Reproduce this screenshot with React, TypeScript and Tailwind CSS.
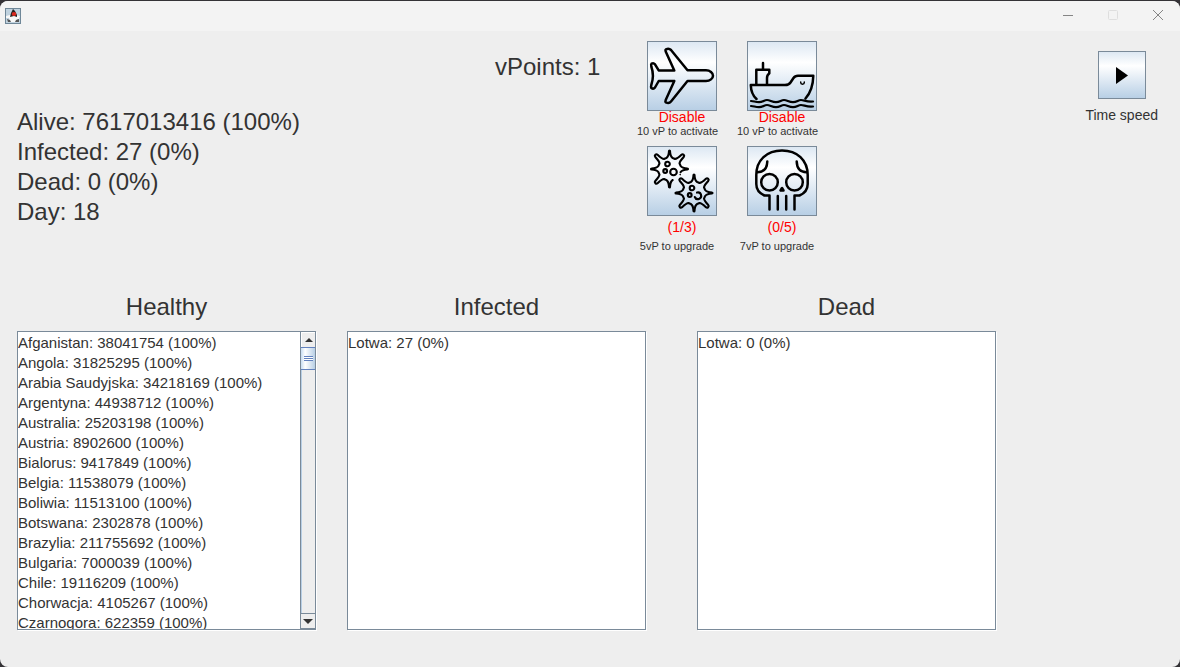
import type { ReactNode } from "react";

const healthy = [
  "Afganistan: 38041754 (100%)",
  "Angola: 31825295 (100%)",
  "Arabia Saudyjska: 34218169 (100%)",
  "Argentyna: 44938712 (100%)",
  "Australia: 25203198 (100%)",
  "Austria: 8902600 (100%)",
  "Bialorus: 9417849 (100%)",
  "Belgia: 11538079 (100%)",
  "Boliwia: 11513100 (100%)",
  "Botswana: 2302878 (100%)",
  "Brazylia: 211755692 (100%)",
  "Bulgaria: 7000039 (100%)",
  "Chile: 19116209 (100%)",
  "Chorwacja: 4105267 (100%)",
  "Czarnogora: 622359 (100%)",
];

const metal =
  "flex items-center justify-center border border-[#7a8a99] bg-linear-to-b from-[#dde8f3] via-white via-30% to-[#b8cfe5]";

const iconProps = {
  viewBox: "0 0 70 70",
  className: "size-[70px] shrink-0",
  fill: "none",
  stroke: "#000",
  strokeWidth: 2.5,
  strokeLinecap: "round" as const,
  strokeLinejoin: "round" as const,
  "aria-hidden": true,
};

function PlaneIcon() {
  return (
    <svg {...iconProps}>
      <path d="M40.5 29.3H59C63 29.3 66 32 66 34.7S63 40 59 40H40.5L24 60.5Q22 63 19 61.5Q18 60.5 18.7 59L27.3 40H11.7L8 46.5Q6.500 48.500 4.300 47Q3.800 46 4.300 44Q7.500 34.700 4.300 25.500Q3.800 23.500 4.600 22.600Q6.500 21.500 8 23.300L11.700 29.400H27.300L18.700 10.500Q18 9 19 8.300Q22 7 24 9Z" />
    </svg>
  );
}

function ShipIcon() {
  return (
    <svg {...iconProps}>
      <path d="M9.500 58Q4 53 3.800 44H38Q42 44 43.500 41.500L46.500 37Q48 34.700 51 34.700H66.300Q66 49 58.500 57.500" />
      <path d="M9.300 43.500V28.700H22.300V32.500Q20 34 20 37V43.500M16 28.500V22" />
      <path d="M53.700 41V41.600Q53.700 43.200 55.500 43.200T57.300 41.600V41" strokeWidth="1.500" />
      <path d="M4 60C7 60 8 61.200 12 61.200S17 59 20 59S25 61.200 29 61.200S34 59 37 59S42 61.200 46 61.200S51 59 54 59S60 61.200 66 60.500M4 65C7 65 8 66.200 12 66.200S17 64 20 64S25 66.200 29 66.200S34 64 37 64S42 66.200 46 66.200S51 64 54 64S60 66.200 66 65.500" strokeWidth="2.200" />
    </svg>
  );
}

function virusPath(first: number, count: number) {
  const point = (radius: number, side: number, angle: number) => {
    const c = Math.cos(angle);
    const s = Math.sin(angle);
    return `${(radius * c - side * s).toFixed(2)} ${(radius * s + side * c).toFixed(2)}`;
  };
  let d = "";
  for (let i = first; i < first + count; i++) {
    const angle = (i * Math.PI) / 4;
    const diagonal = i % 2 !== 0;
    const tip = diagonal ? 18.5 : 18;
    const half = diagonal ? 1.6 : 0.5;
    d += `${i === first ? "M" : "A11.500 11.500 0 0 1 "}${point(11, -3.2, angle)}`;
    d += `Q${point(12.5, -half - 0.2, angle)} ${point(tip, -half, angle)}`;
    d += `A${half} ${half} 0 0 1 ${point(tip, half, angle)}`;
    d += `Q${point(12.5, half + 0.2, angle)} ${point(11, 3.2, angle)}`;
  }
  return count === 8 ? `${d}A11.500 11.500 0 0 1 ${point(11, -3.2, (first * Math.PI) / 4)}Z` : d;
}

function VirusIcon() {
  return (
    <svg {...iconProps} strokeWidth={2.1}>
      <g transform="translate(22.500 23)">
        <path d={virusPath(2, 7)} />
        <circle cx="-2" cy="-5" r="2.300" />
        <circle cx="-4.300" cy="2" r="1.900" />
        <circle cx="4" cy="3" r="3.300" />
        <path d="M10.700 5.500V5.600" strokeWidth="1.600" />
      </g>
      <g transform="translate(47 47)">
        <path d={virusPath(0, 8)} />
        <circle cx="-2" cy="-5" r="2.300" />
        <circle cx="-4.300" cy="2" r="1.900" />
        <path d="M3 -.4A3.300 3.300 0 1 1 .8 4" />
      </g>
    </svg>
  );
}

function SkullIcon() {
  return (
    <svg {...iconProps}>
      <path d="M22.500 63.500V49.500H17.500Q9.300 46 9.300 38V29C9.300 14 20 4.400 35 4.400S60.700 14 60.700 29V38Q60.700 46 52.500 49.500H47.500V63.500M30.800 50V63.500M39.200 50V63.500" />
      <circle cx="22.500" cy="36.300" r="8.300" />
      <circle cx="47.500" cy="36.300" r="8.300" />
      <path d="M35 42L33.500 44.500H36.500Z" />
      <path d="M10.500 26.200Q20 26 20.300 15.500M59.500 26.200Q50 26 49.700 15.500" />
    </svg>
  );
}

function DukeIcon() {
  return (
    <svg viewBox="0 0 16 16" className="size-4" aria-hidden="true">
      <rect x=".5" y=".5" width="15" height="15" fill="#c0d2df" stroke="#6f8798" />
      <path d="M1 8L5 7L11 7L15 8L14 11L12 11L11 14H5L4 10L1 10Z" fill="#f8f8f8" />
      <path d="M8 1L10 3L12 7L12 9L9 8L5 9L6 5Z" fill="#222" />
      <path d="M2 11L5 12L6 14H3ZM11 12L14 11V14H10Z" fill="#555" />
      <ellipse cx="9" cy="6" rx="2.300" ry="2" fill="#d8281f" />
    </svg>
  );
}

function Tool({ label, icon, status, note, gap }: { label: string; icon: ReactNode; status: string; note: string; gap: string }) {
  return (
    <div className="flex w-20 flex-col">
      <button aria-label={label} className={`${metal} size-[70px] self-end`}>
        {icon}
      </button>
      <div className={`flex flex-col ${gap}`}>
        <span className="w-[70px] self-end text-center text-sm leading-3 text-[#ff0000]">{status}</span>
        <span className="text-center text-[11px] leading-4 whitespace-nowrap">{note}</span>
      </div>
    </div>
  );
}

function ScrollBar() {
  return (
    <div className="flex w-[15px] shrink-0 flex-col border-l border-[#7a8a99] bg-[#eeeeee]">
      <button aria-label="Scroll up" className="flex h-[15px] items-center justify-center border-t border-l border-white">
        <svg viewBox="0 0 8 4" className="h-1 w-2" aria-hidden="true"><path d="M4 0L8 4H0Z" fill="#333" /></svg>
      </button>
      <div className="flex flex-1 flex-col border-l border-[#b8cfe5]">
        <div className="-ml-px flex h-[23px] flex-col items-center justify-center border-y border-[#6382bf] bg-linear-to-r from-[#c8ddf2] via-white via-30% to-[#b8cfe5]">
          <i className="h-px w-[9px] bg-[#6382bf]" />
          <i className="h-px w-[9px] bg-white" />
          <i className="h-px w-[9px] bg-[#6382bf]" />
          <i className="h-px w-[9px] bg-white" />
          <i className="h-px w-[9px] bg-[#6382bf]" />
        </div>
      </div>
      <button aria-label="Scroll down" className="flex h-4 items-center justify-center border-y border-[#7a8a99]">
        <svg viewBox="0 0 10 5" className="h-[5px] w-2.5" aria-hidden="true"><path d="M0 0H10L5 5Z" fill="#333" /></svg>
      </button>
    </div>
  );
}

function ListPanel({ title, items, scroll }: { title: string; items: string[]; scroll?: boolean }) {
  return (
    <section className="flex min-w-0 flex-1 flex-col">
      <h2 className="mb-[9px] text-center text-2xl leading-[30px]">{title}</h2>
      <div className="flex h-[299px] border border-[#7a8a99] bg-white shadow-[1px_1px_0_#fff]">
        <ul className="flex-1 overflow-hidden pt-px text-[15px] leading-5 whitespace-nowrap">
          {items.map((item) => (
            <li key={item}>{item}</li>
          ))}
        </ul>
        {scroll && <ScrollBar />}
      </div>
    </section>
  );
}

export default function App() {
  return (
    <div className="min-h-screen bg-[#343236] pt-px font-['Liberation_Sans',Arial,sans-serif] text-[#333]">
      <div className="flex min-h-[calc(100vh-1px)] flex-col overflow-hidden rounded-lg bg-[#eeeeee]">
        <header className="flex h-[30px] items-center justify-between bg-[#f3f3f3] pl-[5px]">
          <DukeIcon />
          <div className="flex self-start text-[#858585]">
            <button aria-label="Minimize" className="flex h-7 w-[45px] items-center justify-center">
              <svg viewBox="0 0 12 12" className="size-3" stroke="currentColor" aria-hidden="true"><path d="M1 6.500H11" /></svg>
            </button>
            <button aria-label="Maximize" disabled className="flex h-7 w-[45px] items-center justify-center text-[#dedede]">
              <svg viewBox="0 0 12 12" className="size-3" fill="none" stroke="currentColor" aria-hidden="true"><rect x="1.500" y="1.500" width="9" height="9" rx="1" /></svg>
            </button>
            <button aria-label="Close" className="flex h-7 w-[45px] items-center justify-center">
              <svg viewBox="0 0 12 12" className="size-3" stroke="currentColor" aria-hidden="true"><path d="M1 1L11 11M11 1L1 11" /></svg>
            </button>
          </div>
        </header>
        <main>
          <div className="grid grid-cols-[478px_142px_180px_1fr] pt-2.5 pl-[17px]">
            <div className="pt-[66px] text-2xl leading-[30px]">
              <p>Alive: 7617013416 (100%)</p>
              <p>Infected: 27 (0%)</p>
              <p>Dead: 0 (0%)</p>
              <p>Day: 18</p>
            </div>
            <p className="pt-[11px] text-2xl leading-[30px]">vPoints: 1</p>
            <div className="grid grid-cols-2 gap-x-5 gap-y-[7px]">
              <Tool label="Planes" icon={<PlaneIcon />} status="Disable" note="10 vP to activate" gap="gap-0" />
              <Tool label="Ships" icon={<ShipIcon />} status="Disable" note="10 vP to activate" gap="gap-0" />
              <Tool label="Infectivity" icon={<VirusIcon />} status="(1/3)" note="5vP to upgrade" gap="gap-[5px] pt-[5px]" />
              <Tool label="Mortality" icon={<SkullIcon />} status="(0/5)" note="7vP to upgrade" gap="gap-[5px] pt-[5px]" />
            </div>
            <div className="flex flex-col items-center gap-2 justify-self-end pt-2.5 pr-[22px]">
              <button aria-label="Time speed" className={`${metal} size-12`}>
                <svg viewBox="0 0 12 17" className="h-[17px] w-3" aria-hidden="true"><path d="M0 0L12 8.500L0 17Z" /></svg>
              </button>
              <span className="text-sm leading-4">Time speed</span>
            </div>
          </div>
          <div className="flex pt-[38px] pr-[184px] pl-[17px]">
            <ListPanel title="Healthy" items={healthy} scroll />
            <div className="w-[31px]" />
            <ListPanel title="Infected" items={["Lotwa: 27 (0%)"]} />
            <div className="w-[51px]" />
            <ListPanel title="Dead" items={["Lotwa: 0 (0%)"]} />
          </div>
        </main>
      </div>
    </div>
  );
}
